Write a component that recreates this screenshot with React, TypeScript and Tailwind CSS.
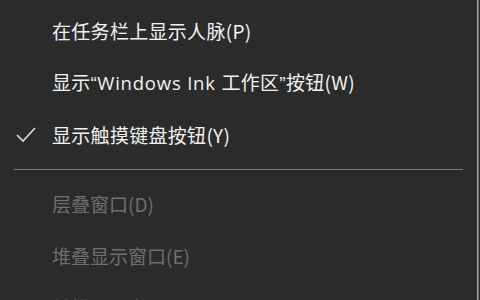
const q = "font-['Liberation_Sans',sans-serif]";
const latin = "font-['Open_Sans',sans-serif] text-[18.5px] tracking-[0.8px]";

const items = [
  { key: "people", label: <>在任务栏上显示人脉(P)</>, checked: false },
  {
    key: "ink",
    label: (
      <>
        显示<span className={q}>“</span>
        <span className={latin}>Windows Ink </span>工作区<span className={q}>”</span>按钮(W)
      </>
    ),
    checked: false,
  },
  { key: "kbd", label: <>显示触摸键盘按钮(Y)</>, checked: true },
];

const disabledItems = ["层叠窗口(D)", "堆叠显示窗口(E)", "并排显示窗口(I)"];

function Check() {
  return (
    <svg width="22" height="18" viewBox="0 0 22 18" className="absolute left-[15px] top-1/2 -translate-y-1/2">
      <polyline points="2,9 8,15 20,2" fill="none" stroke="#d8dde6" strokeWidth="1.6" />
    </svg>
  );
}

export default function App() {
  return (
    <div className="flex h-[300px] w-[480px] overflow-hidden bg-[#2b2b2b]" style={{ fontFamily: '"Noto Sans CJK SC", "Noto Sans", sans-serif' }}>
      <div className="flex w-[477px] flex-col pt-[5px]">
        {items.map((it) => (
          <div key={it.key} className="relative flex h-[52px] shrink-0 items-center pl-[52px] text-[19px] text-[#f2f2f2]">
            {it.checked && <Check />}
            <span className="whitespace-nowrap tracking-[0.3px]">{it.label}</span>
          </div>
        ))}
        <div className="mx-[14px] mb-[8px] mt-[8px] h-px shrink-0 bg-[#7c7c7c]" />
        {disabledItems.map((label) => (
          <div key={label} className="flex h-[52px] shrink-0 items-center pl-[52px] text-[19px] text-[#6e6e6e]">
            <span className="whitespace-nowrap">{label}</span>
          </div>
        ))}
      </div>
      <div className="w-px bg-[#a5a5a5]" />
      <div className="w-px bg-[#6a6a6a]" />
      <div className="w-px bg-[#2b2b2b]" />
    </div>
  );
}
